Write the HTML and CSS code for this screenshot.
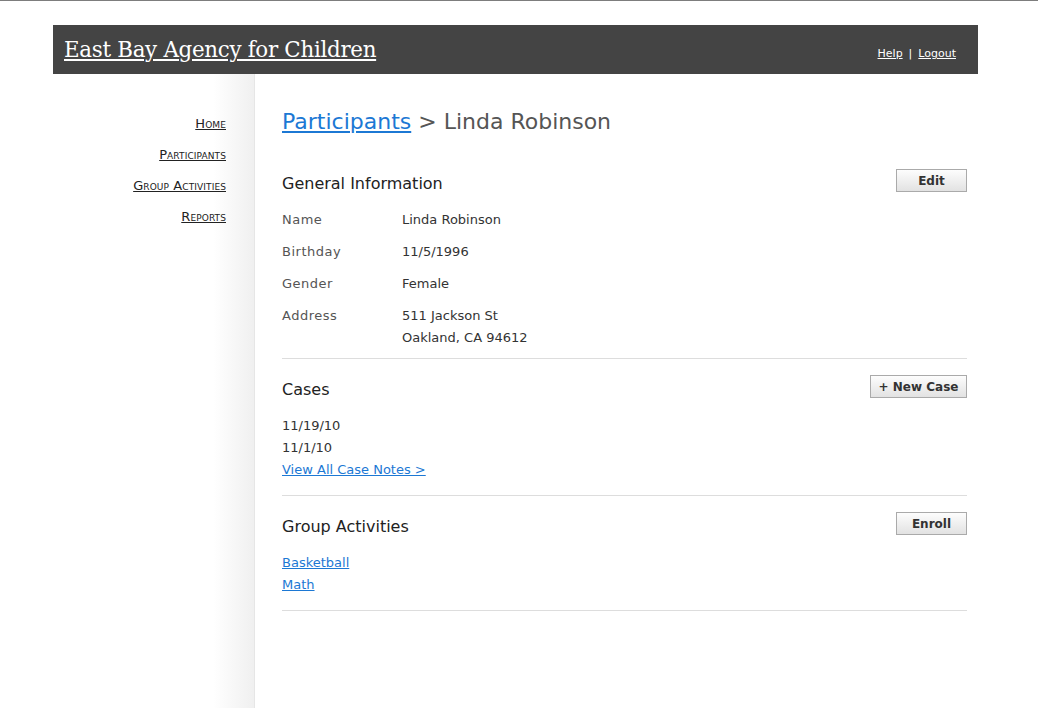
FILE: index.html
```html
<!DOCTYPE html>
<html>
<head>
<meta charset="utf-8">
<link rel="stylesheet" href="styles.css">
</head>
<body>
<div class="page">
  <header class="masthead">
    <a class="brand" href="#">East Bay Agency for Children</a>
    <nav class="util">
      <a href="#">Help</a><span class="sep">|</span><a href="#">Logout</a>
    </nav>
  </header>
  <div class="body">
    <aside class="sidebar">
      <a href="#">Home</a>
      <a href="#">Participants</a>
      <a href="#">Group Activities</a>
      <a href="#">Reports</a>
    </aside>
    <main class="main">
      <h1 class="crumbs"><a href="#">Participants</a> &gt; Linda Robinson</h1>

      <section class="section section-info">
        <div class="sec-head">
          <h2>General Information</h2>
          <button class="btn btn-edit">Edit</button>
        </div>
        <dl class="info">
          <dt>Name</dt><dd>Linda Robinson</dd>
          <dt>Birthday</dt><dd>11/5/1996</dd>
          <dt>Gender</dt><dd>Female</dd>
          <dt>Address</dt><dd>511 Jackson St<br>Oakland, CA 94612</dd>
        </dl>
      </section>

      <section class="section">
        <div class="sec-head">
          <h2>Cases</h2>
          <button class="btn btn-new">+ New Case</button>
        </div>
        <ul class="list">
          <li>11/19/10</li>
          <li>11/1/10</li>
          <li><a href="#">View All Case Notes &gt;</a></li>
        </ul>
      </section>

      <section class="section">
        <div class="sec-head">
          <h2>Group Activities</h2>
          <button class="btn btn-edit">Enroll</button>
        </div>
        <ul class="list">
          <li><a href="#">Basketball</a></li>
          <li><a href="#">Math</a></li>
        </ul>
      </section>
    </main>
  </div>
</div>
</body>
</html>
```
FILE: styles.css
```css
* { box-sizing: border-box; }
html, body { height: 100%; }
body {
  margin: 0;
  border-top: 1px solid #7d7d7d;
  font-family: "DejaVu Sans", "Liberation Sans", sans-serif;
  color: #333;
  background: #fff;
  overflow: hidden;
}
.page {
  width: 925px;
  margin-left: 53px;
  padding-top: 24px;
  height: 100%;
  display: flex;
  flex-direction: column;
}
.masthead {
  height: 49px;
  background: #444;
  display: flex;
  align-items: center;
  justify-content: space-between;
  padding: 0 22px 0 11px;
}
.brand {
  font-family: "DejaVu Serif", "Liberation Serif", serif;
  font-size: 21.4px;
  line-height: 26px;
  color: #fff;
  letter-spacing: -0.3px;
}
.util {
  font-family: "DejaVu Sans", sans-serif;
  font-size: 11px;
  color: #fff;
  display: flex;
  gap: 6px;
  margin-top: 8px;
}
.util a { color: #fff; }
.body {
  flex: 1;
  display: flex;
}
.sidebar {
  width: 202px;
  display: flex;
  flex-direction: column;
  align-items: flex-end;
  gap: 14px;
  padding: 41px 28px 0 0;
  background: linear-gradient(to right, #fff 0, #fff 160px, #f0f0f0 200px);
  border-right: 1px solid #e6e6e6;
}
.sidebar a {
  font-variant: small-caps;
  font-size: 13px;
  line-height: 17px;
  color: #222;
  letter-spacing: 0.1px;
}
.main {
  flex: 1;
  padding: 33px 11px 0 27px;
}
.crumbs {
  margin: 0 0 32px;
  font-weight: normal;
  font-size: 22px;
  line-height: 30px;
  color: #555;
}
.crumbs a { color: #1c78d4; }
.section {
  border-bottom: 1px solid #ddd;
  padding-bottom: 14px;
  margin-bottom: 16px;
}
.section-info { padding-bottom: 9px; }
.sec-head {
  display: flex;
  justify-content: space-between;
  align-items: flex-start;
  height: 23px;
  margin-bottom: 17px;
}
.sec-head h2 {
  margin: 0;
  padding-top: 5px;
  font-weight: normal;
  font-size: 16px;
  line-height: 19px;
  color: #222;
}
.btn {
  height: 23px;
  border: 1px solid #aaa;
  background: linear-gradient(#fdfdfd, #e2e2e2);
  font-family: "DejaVu Sans", sans-serif;
  font-size: 12px;
  font-weight: bold;
  color: #333;
  padding: 0;
}
.btn-edit { width: 71px; }
.btn-new { width: 97px; }
.info {
  display: grid;
  grid-template-columns: 120px 1fr;
  row-gap: 10px;
  margin: 0;
  font-size: 13px;
  line-height: 22px;
}
.info dt { color: #555; letter-spacing: 0.5px; }
.info dd { margin: 0; color: #333; }
.list {
  list-style: none;
  margin: 0;
  padding: 0;
  font-size: 13px;
  line-height: 22px;
  color: #333;
}
.list a { color: #1c78d4; }
```
